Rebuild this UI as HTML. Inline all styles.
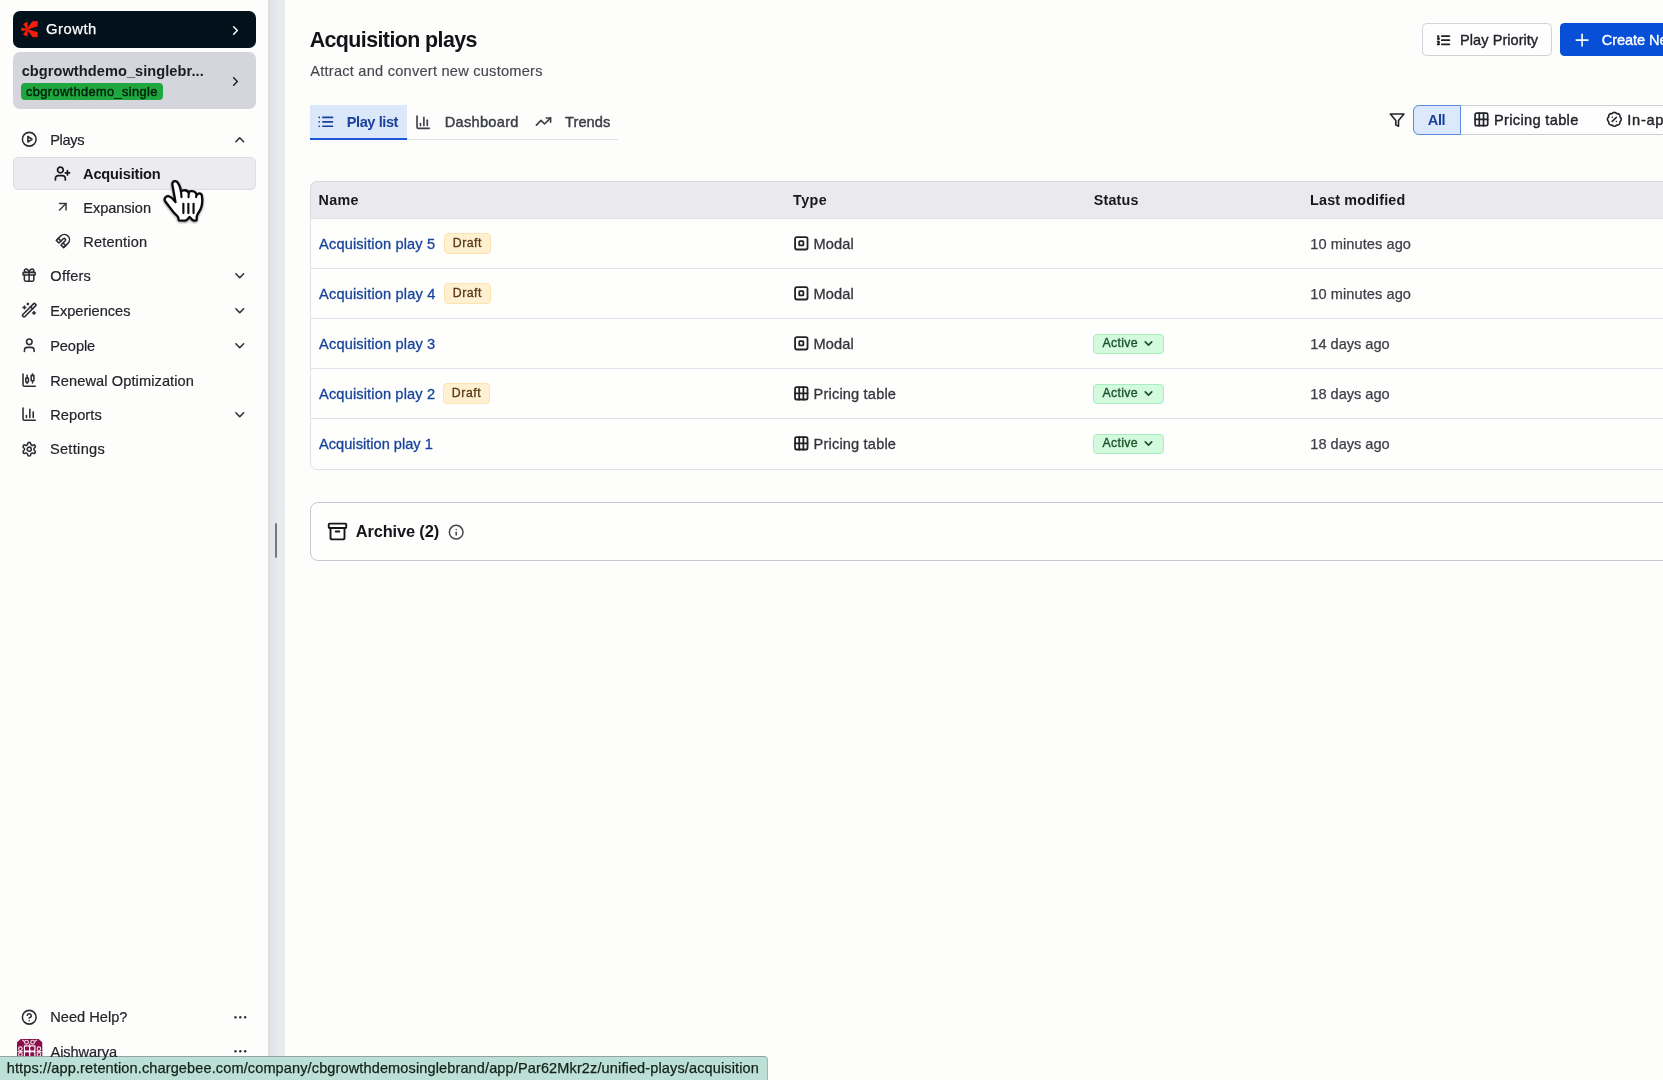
<!DOCTYPE html>
<html lang="en">
<head>
<meta charset="utf-8">
<title>Acquisition plays</title>
<style>
*{box-sizing:border-box;margin:0;padding:0}
html,body{width:1663px;height:1080px;overflow:hidden;background:#fdfdfc;font-family:"Liberation Sans",Arial,sans-serif;color:#1a1c22}
.abs{position:absolute}
#txt{position:absolute;left:0;top:0;width:100%;height:100%;opacity:0.999}
.t{position:absolute;white-space:nowrap}
svg{position:absolute;overflow:visible}
</style>
</head>
<body>

<!-- sidebar -->
<div class="abs" style="left:13.2px;top:11px;width:242.6px;height:36.5px;background:#02111b;border-radius:7px"></div>
<div class="abs" style="left:13.2px;top:52.4px;width:242.6px;height:56.7px;background:#d5d5de;border-radius:7px"></div>
<div class="abs" style="left:21px;top:83.1px;width:141.9px;height:16.8px;background:#1ea73e;border-radius:4px"></div>
<div class="abs" style="left:13px;top:157px;width:243px;height:32.6px;background:#ececf0;border:1px solid #dcdce6;border-radius:5px"></div>
<svg style="left:21px;top:21px" width="17" height="16.5" viewBox="0 0 17 16.5"><g fill="#f21d0d"><polygon points="5.9,8.2 2.0,3.1 6.5,0.6 6.7,7"/><polygon points="6.3,7.1 11.5,0.3 16.7,0 16.7,5.3 12.7,6.4 6.6,8.6"/><polygon points="6,7.6 0.1,6.7 0.7,10.2 6,8.9"/><polygon points="6.6,7.9 12.7,10.1 16.7,11 16.7,16.2 11.5,15.9 6.3,9.3"/><polygon points="5.9,8.2 2.0,13.6 6.5,15.7 6.7,9.4"/></g></svg>
<svg style="left:227.70px;top:22.90px;color:#ffffff" width="15.00" height="15.00" viewBox="0 0 24 24" fill="none" stroke="#ffffff" stroke-width="2.40" stroke-linecap="round" stroke-linejoin="round"><path d="m9 18 6-6-6-6"/></svg>
<svg style="left:227.70px;top:74.10px;color:#1f2128" width="15.00" height="15.00" viewBox="0 0 24 24" fill="none" stroke="#1f2128" stroke-width="2.40" stroke-linecap="round" stroke-linejoin="round"><path d="m9 18 6-6-6-6"/></svg>
<svg style="left:20.95px;top:131.15px;color:#2b2d34" width="16.50" height="16.50" viewBox="0 0 24 24" fill="none" stroke="#2b2d34" stroke-width="2.25" stroke-linecap="round" stroke-linejoin="round"><circle cx="12" cy="12" r="10"/><polygon points="10 8 16 12 10 16 10 8"/></svg>
<svg style="left:21.30px;top:267.40px;color:#2b2d34" width="16.20" height="16.20" viewBox="0 0 24 24" fill="none" stroke="#2b2d34" stroke-width="2.30" stroke-linecap="round" stroke-linejoin="round"><rect x="3" y="8" width="18" height="4" rx="1"/><path d="M12 8v13"/><path d="M19 12v7a2 2 0 0 1-2 2H7a2 2 0 0 1-2-2v-7"/><path d="M7.500 8a2.500 2.500 0 0 1 0-5A4.800 8 0 0 1 12 8a4.800 8 0 0 1 4.500-5 2.500 2.500 0 0 1 0 5"/></svg>
<svg style="left:21.10px;top:302.10px;color:#2b2d34" width="16.40" height="16.40" viewBox="0 0 24 24" fill="none" stroke="#2b2d34" stroke-width="2.27" stroke-linecap="round" stroke-linejoin="round"><path d="m21.640 3.640-1.280-1.280a1.210 1.210 0 0 0-1.720 0L2.360 18.640a1.210 1.210 0 0 0 0 1.720l1.280 1.280a1.200 1.200 0 0 0 1.720 0L21.640 5.360a1.200 1.200 0 0 0 0-1.720"/><path d="m14 7 3 3"/><path d="M5 6v4"/><path d="M19 14v4"/><path d="M10 2v2"/><path d="M7 8H3"/><path d="M21 16h-4"/><path d="M11 3H9"/></svg>
<svg style="left:21.00px;top:337.10px;color:#2b2d34" width="16.60" height="16.60" viewBox="0 0 24 24" fill="none" stroke="#2b2d34" stroke-width="2.24" stroke-linecap="round" stroke-linejoin="round"><path d="M19 21v-2a4 4 0 0 0-4-4H9a4 4 0 0 0-4 4v2"/><circle cx="12" cy="7" r="4"/></svg>
<svg style="left:21.05px;top:371.95px;color:#2b2d34" width="16.30" height="16.30" viewBox="0 0 24 24" fill="none" stroke="#2b2d34" stroke-width="2.28" stroke-linecap="round" stroke-linejoin="round"><path d="M9 5v4"/><rect width="4" height="6" x="7" y="9" rx="1"/><path d="M9 15v2"/><path d="M17 3v2"/><rect width="4" height="8" x="15" y="5" rx="1"/><path d="M17 13v3"/><path d="M3 3v16a2 2 0 0 0 2 2h16"/></svg>
<svg style="left:21.05px;top:406.25px;color:#2b2d34" width="16.30" height="16.30" viewBox="0 0 24 24" fill="none" stroke="#2b2d34" stroke-width="2.28" stroke-linecap="round" stroke-linejoin="round"><path d="M3 3v16a2 2 0 0 0 2 2h16"/><path d="M18 17V9"/><path d="M13 17V5"/><path d="M8 17v-3"/></svg>
<svg style="left:21.10px;top:441.20px;color:#2b2d34" width="16.40" height="16.40" viewBox="0 0 24 24" fill="none" stroke="#2b2d34" stroke-width="2.27" stroke-linecap="round" stroke-linejoin="round"><path d="M12.220 2h-.440a2 2 0 0 0-2 2v.180a2 2 0 0 1-1 1.730l-.430.250a2 2 0 0 1-2 0l-.150-.080a2 2 0 0 0-2.730.730l-.220.380a2 2 0 0 0 .730 2.730l.150.100a2 2 0 0 1 1 1.720v.510a2 2 0 0 1-1 1.740l-.150.090a2 2 0 0 0-.730 2.730l.220.380a2 2 0 0 0 2.730.730l.150-.080a2 2 0 0 1 2 0l.430.250a2 2 0 0 1 1 1.730V20a2 2 0 0 0 2 2h.440a2 2 0 0 0 2-2v-.180a2 2 0 0 1 1-1.730l.430-.250a2 2 0 0 1 2 0l.150.080a2 2 0 0 0 2.730-.730l.220-.390a2 2 0 0 0-.730-2.730l-.150-.080a2 2 0 0 1-1-1.740v-.500a2 2 0 0 1 1-1.740l.150-.090a2 2 0 0 0 .730-2.730l-.220-.380a2 2 0 0 0-2.730-.730l-.150.080a2 2 0 0 1-2 0l-.430-.250a2 2 0 0 1-1-1.730V4a2 2 0 0 0-2-2z"/><circle cx="12" cy="12" r="3"/></svg>
<svg style="left:20.95px;top:1008.75px;color:#2b2d34" width="16.50" height="16.50" viewBox="0 0 24 24" fill="none" stroke="#2b2d34" stroke-width="2.25" stroke-linecap="round" stroke-linejoin="round"><circle cx="12" cy="12" r="10"/><path d="M9.090 9a3 3 0 0 1 5.830 1c0 2-3 3-3 3"/><path d="M12 17h.01"/></svg>
<svg style="left:53.80px;top:165.10px;color:#17181d" width="17.00" height="17.00" viewBox="0 0 24 24" fill="none" stroke="#17181d" stroke-width="2.40" stroke-linecap="round" stroke-linejoin="round"><path d="M16 21v-2a4 4 0 0 0-4-4H6a4 4 0 0 0-4 4v2"/><circle cx="9" cy="7" r="4"/><path d="M19 8v6"/><path d="M22 11h-6"/></svg>
<svg style="left:54.50px;top:199.40px;color:#3a3c43" width="15.60" height="15.60" viewBox="0 0 24 24" fill="none" stroke="#3a3c43" stroke-width="2.31" stroke-linecap="round" stroke-linejoin="round"><path d="M7 7h10v10"/><path d="M7 17 17 7"/></svg>
<svg style="left:54.60px;top:233.00px;color:#2b2d34" width="16.00" height="16.00" viewBox="0 0 24 24" fill="none" stroke="#2b2d34" stroke-width="2.33" stroke-linecap="round" stroke-linejoin="round"><path d="m6 15-4-4 6.750-6.770a7.790 7.790 0 0 1 11 11L13 22l-4-4 6.390-6.360a2.140 2.140 0 0 0-3-3L6 15"/><path d="m5 8 4 4"/><path d="m12 15 4 4"/></svg>
<svg style="left:232.05px;top:131.85px;color:#2b2d34" width="15.50" height="15.50" viewBox="0 0 24 24" fill="none" stroke="#2b2d34" stroke-width="2.40" stroke-linecap="round" stroke-linejoin="round"><path d="m18 15-6-6-6 6"/></svg>
<svg style="left:232.05px;top:267.75px;color:#2b2d34" width="15.50" height="15.50" viewBox="0 0 24 24" fill="none" stroke="#2b2d34" stroke-width="2.40" stroke-linecap="round" stroke-linejoin="round"><path d="m6 9 6 6 6-6"/></svg>
<svg style="left:232.05px;top:302.65px;color:#2b2d34" width="15.50" height="15.50" viewBox="0 0 24 24" fill="none" stroke="#2b2d34" stroke-width="2.40" stroke-linecap="round" stroke-linejoin="round"><path d="m6 9 6 6 6-6"/></svg>
<svg style="left:232.05px;top:337.55px;color:#2b2d34" width="15.50" height="15.50" viewBox="0 0 24 24" fill="none" stroke="#2b2d34" stroke-width="2.40" stroke-linecap="round" stroke-linejoin="round"><path d="m6 9 6 6 6-6"/></svg>
<svg style="left:232.05px;top:406.75px;color:#2b2d34" width="15.50" height="15.50" viewBox="0 0 24 24" fill="none" stroke="#2b2d34" stroke-width="2.40" stroke-linecap="round" stroke-linejoin="round"><path d="m6 9 6 6 6-6"/></svg>
<svg style="left:231.60px;top:1008.90px;color:#2b2d34" width="16.60" height="16.60" viewBox="0 0 24 24" fill="none" stroke="#2b2d34" stroke-width="0.00" stroke-linecap="round" stroke-linejoin="round"><circle cx="5" cy="12" r="1.700" fill="currentColor" stroke="none"/><circle cx="12" cy="12" r="1.700" fill="currentColor" stroke="none"/><circle cx="19" cy="12" r="1.700" fill="currentColor" stroke="none"/></svg>
<svg style="left:231.60px;top:1042.70px;color:#2b2d34" width="16.60" height="16.60" viewBox="0 0 24 24" fill="none" stroke="#2b2d34" stroke-width="0.00" stroke-linecap="round" stroke-linejoin="round"><circle cx="5" cy="12" r="1.700" fill="currentColor" stroke="none"/><circle cx="12" cy="12" r="1.700" fill="currentColor" stroke="none"/><circle cx="19" cy="12" r="1.700" fill="currentColor" stroke="none"/></svg>
<svg style="left:16.9px;top:1038.9px" width="25.3" height="25.3" viewBox="0 0 24 24"><path d="M3.500 0H20.500L24 3V21a3 3 0 0 1-3 3H3a3 3 0 0 1-3-3V3Z" fill="#890f4b"/><rect x="6.500" y="6" width="11" height="11.500" fill="#fdf6f9"/><g fill="#890f4b"><rect x="7.600" y="7.200" width="3.800" height="3.800" rx="0.8"/><rect x="12.600" y="7.200" width="3.800" height="3.800" rx="0.8"/><rect x="7.600" y="12.600" width="3.800" height="3.800" rx="0.8"/><rect x="12.600" y="12.600" width="3.800" height="3.800" rx="0.8"/></g><g fill="none" stroke="#f3dbe6" stroke-width="1.1"><circle cx="9" cy="3" r="1.800"/><circle cx="14.800" cy="3" r="1.800"/><circle cx="3.200" cy="9.200" r="1.700"/><circle cx="20.800" cy="9.200" r="1.700"/><circle cx="3.200" cy="14.700" r="1.700"/><circle cx="20.800" cy="14.700" r="1.700"/><path d="M0.500 12h5M18.500 12h5M5 0.800l2 1.500M19 0.800l-2 1.500M12 4.500v1.500"/></g></svg>
<div class="abs" style="left:268.4px;top:0px;width:16.6px;height:1080px;background:linear-gradient(90deg,#dcdedd 0,#e1e3e5 18%,#e5e6ea 40%,#e9eaec 60%,#ebeeed 100%)"></div>
<div class="abs" style="left:275px;top:523px;width:2.2px;height:35px;background:#77787d;border-radius:1px"></div>
<!-- main -->
<div class="abs" style="left:310px;top:139.3px;width:308.4px;height:1px;background:#e0e0e9"></div>
<div class="abs" style="left:309.8px;top:105.4px;width:97.6px;height:33.2px;background:#dbe8fa"></div>
<div class="abs" style="left:309.8px;top:138.4px;width:97.6px;height:2px;background:#1d56d8"></div>
<svg style="left:317.15px;top:113.25px;color:#1c3f99" width="17.70" height="17.70" viewBox="0 0 24 24" fill="none" stroke="#1c3f99" stroke-width="2.31" stroke-linecap="round" stroke-linejoin="round"><path d="M3 12h.01"/><path d="M3 18h.01"/><path d="M3 6h.01"/><path d="M8 12h13"/><path d="M8 18h13"/><path d="M8 6h13"/></svg>
<svg style="left:415.30px;top:114.10px;color:#3f4149" width="16.40" height="16.40" viewBox="0 0 24 24" fill="none" stroke="#3f4149" stroke-width="2.41" stroke-linecap="round" stroke-linejoin="round"><path d="M3 3v16a2 2 0 0 0 2 2h16"/><path d="M18 17V9"/><path d="M13 17V5"/><path d="M8 17v-3"/></svg>
<svg style="left:534.90px;top:113.40px;color:#3f4149" width="17.00" height="17.00" viewBox="0 0 24 24" fill="none" stroke="#3f4149" stroke-width="2.33" stroke-linecap="round" stroke-linejoin="round"><polyline points="22 7 13.5 15.5 8.5 10.5 2 17"/><polyline points="16 7 22 7 22 13"/></svg>
<div class="abs" style="left:1422px;top:23px;width:129.6px;height:33.2px;background:#fefefe;border:1px solid #d2d2db;border-radius:4.500px"></div>
<svg style="left:1435.20px;top:31.50px;color:#1d1f25" width="16.40" height="16.40" viewBox="0 0 24 24" fill="none" stroke="#1d1f25" stroke-width="2.63" stroke-linecap="round" stroke-linejoin="round"><path d="M10 12h11"/><path d="M10 18h11"/><path d="M10 6h11"/><path d="M4 10h2"/><path d="M6 18H4c0-1 2-2 2-3s-1-1.500-2-1"/><path d="M4 6h1v4"/></svg>
<div class="abs" style="left:1560.2px;top:22.8px;width:129.8px;height:33.2px;background:#064fd6;border-radius:4.500px"></div>
<svg style="left:1572.40px;top:29.60px;color:#ffffff" width="20.20" height="20.20" viewBox="0 0 24 24" fill="none" stroke="#ffffff" stroke-width="1.90" stroke-linecap="round" stroke-linejoin="round"><path d="M5 12h14"/><path d="M12 5v14"/></svg>
<svg style="left:1388.65px;top:111.75px;color:#22242b" width="16.30" height="16.30" viewBox="0 0 24 24" fill="none" stroke="#22242b" stroke-width="2.36" stroke-linecap="round" stroke-linejoin="round"><polygon points="22 3 2 3 10 12.46 10 19 14 21 14 12.46 22 3"/></svg>
<div class="abs" style="left:1413px;top:104.8px;width:277px;height:30.1px;background:#fefefe;border:1px solid #cdcdd5;border-radius:6px"></div>
<div class="abs" style="left:1413px;top:104.8px;width:47.8px;height:30.1px;background:#dbe9fb;border:1px solid #5a8de0;border-radius:6px 0 0 6px"></div>
<svg style="left:1473.20px;top:111.30px;color:#22242b" width="16.80" height="16.80" viewBox="0 0 24 24" fill="none" stroke="#22242b" stroke-width="2.43" stroke-linecap="round" stroke-linejoin="round"><rect width="18" height="18" x="3" y="3" rx="2"/><path d="M9 3v18"/><path d="M15 3v18"/><path d="M3 12h18"/></svg>
<svg style="left:1606.35px;top:111.35px;color:#22242b" width="16.70" height="16.70" viewBox="0 0 24 24" fill="none" stroke="#22242b" stroke-width="2.30" stroke-linecap="round" stroke-linejoin="round"><path d="M3.850 8.620a4 4 0 0 1 4.780-4.770 4 4 0 0 1 6.740 0 4 4 0 0 1 4.780 4.780 4 4 0 0 1 0 6.740 4 4 0 0 1-4.770 4.780 4 4 0 0 1-6.750 0 4 4 0 0 1-4.780-4.770 4 4 0 0 1 0-6.760Z"/><path d="m15 9-6 6"/><path d="M9 9h.01"/><path d="M15 15h.01"/></svg>
<div class="abs" style="left:309.5px;top:180.8px;width:1380.5px;height:288.9px;background:#fefefd;border:1px solid #e0e0ea;border-radius:7px 0 0 7px"></div>
<div class="abs" style="left:309.6px;top:180.8px;width:1380.4px;height:38.2px;background:#eaeaee;border:1px solid #d9d9e4;border-bottom-color:#dedee7;border-radius:7px 0 0 0"></div>
<div class="abs" style="left:310.6px;top:268px;width:1379.4px;height:1px;background:#e0e0ea"></div>
<div class="abs" style="left:310.6px;top:318.1px;width:1379.4px;height:1px;background:#e0e0ea"></div>
<div class="abs" style="left:310.6px;top:368.2px;width:1379.4px;height:1px;background:#e0e0ea"></div>
<div class="abs" style="left:310.6px;top:418.3px;width:1379.4px;height:1px;background:#e0e0ea"></div>
<svg style="left:792.50px;top:235.10px;color:#202228" width="16.60" height="16.60" viewBox="0 0 24 24" fill="none" stroke="#202228" stroke-width="2.60" stroke-linecap="round" stroke-linejoin="round"><rect width="18" height="18" x="3" y="3" rx="2.500"/><rect width="6" height="6" x="9" y="9" rx="1"/></svg>
<div class="abs" style="left:444px;top:233.4px;width:47.2px;height:20.7px;background:#fef0d0;border:1px solid #fce4ac;border-radius:4px"></div>
<svg style="left:792.50px;top:285.15px;color:#202228" width="16.60" height="16.60" viewBox="0 0 24 24" fill="none" stroke="#202228" stroke-width="2.60" stroke-linecap="round" stroke-linejoin="round"><rect width="18" height="18" x="3" y="3" rx="2.500"/><rect width="6" height="6" x="9" y="9" rx="1"/></svg>
<div class="abs" style="left:444px;top:283.4px;width:47.2px;height:20.7px;background:#fef0d0;border:1px solid #fce4ac;border-radius:4px"></div>
<svg style="left:792.50px;top:335.20px;color:#202228" width="16.60" height="16.60" viewBox="0 0 24 24" fill="none" stroke="#202228" stroke-width="2.60" stroke-linecap="round" stroke-linejoin="round"><rect width="18" height="18" x="3" y="3" rx="2.500"/><rect width="6" height="6" x="9" y="9" rx="1"/></svg>
<div class="abs" style="left:1093px;top:333.8px;width:70.7px;height:20.5px;background:#d4fade;border:1px solid #a8eebc;border-radius:4px"></div>
<svg style="left:1142.20px;top:337.40px;color:#1a522b" width="13.00" height="13.00" viewBox="0 0 24 24" fill="none" stroke="#1a522b" stroke-width="3.14" stroke-linecap="round" stroke-linejoin="round"><path d="m6 9 6 6 6-6"/></svg>
<svg style="left:792.50px;top:385.25px;color:#202228" width="16.60" height="16.60" viewBox="0 0 24 24" fill="none" stroke="#202228" stroke-width="2.60" stroke-linecap="round" stroke-linejoin="round"><rect width="18" height="18" x="3" y="3" rx="2"/><path d="M9 3v18"/><path d="M15 3v18"/><path d="M3 12h18"/></svg>
<div class="abs" style="left:443.2px;top:383.4px;width:47.2px;height:20.7px;background:#fef0d0;border:1px solid #fce4ac;border-radius:4px"></div>
<div class="abs" style="left:1093px;top:383.8px;width:70.7px;height:20.5px;background:#d4fade;border:1px solid #a8eebc;border-radius:4px"></div>
<svg style="left:1142.20px;top:387.40px;color:#1a522b" width="13.00" height="13.00" viewBox="0 0 24 24" fill="none" stroke="#1a522b" stroke-width="3.14" stroke-linecap="round" stroke-linejoin="round"><path d="m6 9 6 6 6-6"/></svg>
<svg style="left:792.50px;top:435.30px;color:#202228" width="16.60" height="16.60" viewBox="0 0 24 24" fill="none" stroke="#202228" stroke-width="2.60" stroke-linecap="round" stroke-linejoin="round"><rect width="18" height="18" x="3" y="3" rx="2"/><path d="M9 3v18"/><path d="M15 3v18"/><path d="M3 12h18"/></svg>
<div class="abs" style="left:1093px;top:433.8px;width:70.7px;height:20.5px;background:#d4fade;border:1px solid #a8eebc;border-radius:4px"></div>
<svg style="left:1142.20px;top:437.40px;color:#1a522b" width="13.00" height="13.00" viewBox="0 0 24 24" fill="none" stroke="#1a522b" stroke-width="3.14" stroke-linecap="round" stroke-linejoin="round"><path d="m6 9 6 6 6-6"/></svg>
<div class="abs" style="left:309.6px;top:501.8px;width:1380.4px;height:58.8px;background:#fefefd;border:1px solid #c8c8d5;border-radius:8px 0 0 8px"></div>
<svg style="left:326.50px;top:521.10px;color:#15161b" width="21.00" height="21.00" viewBox="0 0 24 24" fill="none" stroke="#15161b" stroke-width="2.17" stroke-linecap="round" stroke-linejoin="round"><rect width="20" height="5" x="2" y="3" rx="1"/><path d="M4 8v11a2 2 0 0 0 2 2h12a2 2 0 0 0 2-2V8"/><path d="M10 12h4"/></svg>
<svg style="left:447.70px;top:523.60px;color:#45474f" width="16.40" height="16.40" viewBox="0 0 24 24" fill="none" stroke="#45474f" stroke-width="2.20" stroke-linecap="round" stroke-linejoin="round"><circle cx="12" cy="12" r="10"/><path d="M12 16v-4"/><path d="M12 8h.01"/></svg>
<!-- status bubble -->
<div class="abs" style="left:-1px;top:1056.4px;width:768.6px;height:24.6px;background:#bce0d5;border:1px solid #9fb9b1;border-top-color:#93a39e;border-radius:0 4px 0 0"></div>
<!-- text -->
<div id="txt">
<div class="t" id="t0" style="left:46.10px;top:19.27px;font-size:14.8px;line-height:21px;font-weight:normal;color:#ffffff;letter-spacing:0.507px;-webkit-text-stroke:0.25px #ffffff;">Growth</div>
<div class="t" id="t1" style="left:21.67px;top:60.84px;font-size:14.6px;line-height:20px;font-weight:bold;color:#1b1c22;letter-spacing:0.053px;">cbgrowthdemo_singlebr...</div>
<div class="t" id="t2" style="left:26.08px;top:82.56px;font-size:12.8px;line-height:18px;font-weight:normal;color:#031c0a;letter-spacing:0.371px;-webkit-text-stroke:0.4px #031c0a;">cbgrowthdemo_single</div>
<div class="t" id="t3" style="left:50.21px;top:130.14px;font-size:14.6px;line-height:20px;font-weight:normal;color:#22242b;letter-spacing:-0.348px;-webkit-text-stroke:0.2px #22242b;">Plays</div>
<div class="t" id="t4" style="left:83.21px;top:197.64px;font-size:14.6px;line-height:20px;font-weight:normal;color:#22242b;letter-spacing:-0.043px;-webkit-text-stroke:0.2px #22242b;">Expansion</div>
<div class="t" id="t5" style="left:83.21px;top:231.74px;font-size:14.6px;line-height:20px;font-weight:normal;color:#22242b;letter-spacing:0.173px;-webkit-text-stroke:0.2px #22242b;">Retention</div>
<div class="t" id="t6" style="left:50.36px;top:265.74px;font-size:14.6px;line-height:20px;font-weight:normal;color:#22242b;letter-spacing:0.201px;-webkit-text-stroke:0.2px #22242b;">Offers</div>
<div class="t" id="t7" style="left:50.21px;top:300.64px;font-size:14.6px;line-height:20px;font-weight:normal;color:#22242b;letter-spacing:-0.001px;-webkit-text-stroke:0.2px #22242b;">Experiences</div>
<div class="t" id="t8" style="left:50.21px;top:335.64px;font-size:14.6px;line-height:20px;font-weight:normal;color:#22242b;letter-spacing:-0.093px;-webkit-text-stroke:0.2px #22242b;">People</div>
<div class="t" id="t9" style="left:50.21px;top:370.74px;font-size:14.6px;line-height:20px;font-weight:normal;color:#22242b;letter-spacing:0.094px;-webkit-text-stroke:0.2px #22242b;">Renewal Optimization</div>
<div class="t" id="t10" style="left:50.21px;top:404.64px;font-size:14.6px;line-height:20px;font-weight:normal;color:#22242b;letter-spacing:0.066px;-webkit-text-stroke:0.2px #22242b;">Reports</div>
<div class="t" id="t11" style="left:49.92px;top:439.44px;font-size:14.6px;line-height:20px;font-weight:normal;color:#22242b;letter-spacing:0.304px;-webkit-text-stroke:0.2px #22242b;">Settings</div>
<div class="t" id="t12" style="left:50.21px;top:1007.24px;font-size:14.6px;line-height:20px;font-weight:normal;color:#22242b;letter-spacing:0.019px;-webkit-text-stroke:0.2px #22242b;">Need Help?</div>
<div class="t" id="t13" style="left:50.54px;top:1041.54px;font-size:14.6px;line-height:20px;font-weight:normal;color:#22242b;letter-spacing:-0.096px;-webkit-text-stroke:0.2px #22242b;">Aishwarya</div>
<div class="t" id="t14" style="left:83.09px;top:163.74px;font-size:14.6px;line-height:20px;font-weight:bold;color:#15161b;letter-spacing:-0.183px;">Acquisition</div>
<div class="t" id="t15" style="left:6.69px;top:1057.98px;font-size:14.5px;line-height:20px;font-weight:normal;color:#14201c;letter-spacing:0.137px;-webkit-text-stroke:0.25px #14201c;">https://app.retention.chargebee.com/company/cbgrowthdemosinglebrand/app/Par62Mkr2z/unified-plays/acquisition</div>
<div class="t" id="t16" style="left:309.69px;top:25.48px;font-size:21.4px;line-height:30px;font-weight:bold;color:#121318;letter-spacing:-0.586px;">Acquisition plays</div>
<div class="t" id="t17" style="left:310.24px;top:60.74px;font-size:14.6px;line-height:20px;font-weight:normal;color:#45474f;letter-spacing:0.235px;-webkit-text-stroke:0.15px #45474f;">Attract and convert new customers</div>
<div class="t" id="t18" style="left:346.74px;top:111.84px;font-size:14.6px;line-height:20px;font-weight:bold;color:#1c3f99;letter-spacing:-0.434px;">Play list</div>
<div class="t" id="t19" style="left:444.66px;top:111.84px;font-size:14.6px;line-height:20px;font-weight:normal;color:#3c3e46;letter-spacing:0.305px;-webkit-text-stroke:0.45px #3c3e46;">Dashboard</div>
<div class="t" id="t20" style="left:565.12px;top:111.84px;font-size:14.6px;line-height:20px;font-weight:normal;color:#3c3e46;letter-spacing:0.051px;-webkit-text-stroke:0.45px #3c3e46;">Trends</div>
<div class="t" id="t21" style="left:1460.10px;top:29.54px;font-size:14.6px;line-height:20px;font-weight:normal;color:#22242b;letter-spacing:0.019px;-webkit-text-stroke:0.35px #22242b;">Play Priority</div>
<div class="t" id="t22" style="left:1601.85px;top:29.64px;font-size:14.6px;line-height:20px;font-weight:normal;color:#ffffff;letter-spacing:-0.090px;-webkit-text-stroke:0.35px #ffffff;">Create New</div>
<div class="t" id="t23" style="left:1427.82px;top:109.84px;font-size:14.6px;line-height:20px;font-weight:bold;color:#1c3f99;letter-spacing:-0.448px;">All</div>
<div class="t" id="t24" style="left:1493.89px;top:109.84px;font-size:14.6px;line-height:20px;font-weight:normal;color:#22242b;letter-spacing:0.342px;-webkit-text-stroke:0.4px #22242b;">Pricing table</div>
<div class="t" id="t25" style="left:1627.29px;top:109.84px;font-size:14.6px;line-height:20px;font-weight:normal;color:#22242b;letter-spacing:0.732px;-webkit-text-stroke:0.4px #22242b;">In-app</div>
<div class="t" id="t26" style="left:318.52px;top:189.75px;font-size:14.3px;line-height:20px;font-weight:bold;color:#17181d;letter-spacing:0.310px;">Name</div>
<div class="t" id="t27" style="left:793.09px;top:189.75px;font-size:14.3px;line-height:20px;font-weight:bold;color:#17181d;letter-spacing:0.411px;">Type</div>
<div class="t" id="t28" style="left:1093.65px;top:189.75px;font-size:14.3px;line-height:20px;font-weight:bold;color:#17181d;letter-spacing:0.226px;">Status</div>
<div class="t" id="t29" style="left:1310.12px;top:189.75px;font-size:14.3px;line-height:20px;font-weight:bold;color:#17181d;letter-spacing:0.174px;">Last modified</div>
<div class="t" id="t30" style="left:319.07px;top:233.64px;font-size:14.6px;line-height:20px;font-weight:normal;color:#18439b;letter-spacing:0.147px;-webkit-text-stroke:0.3px #18439b;">Acquisition play 5</div>
<div class="t" id="t31" style="left:452.78px;top:235.34px;font-size:12.3px;line-height:17px;font-weight:normal;color:#573716;letter-spacing:0.497px;-webkit-text-stroke:0.3px #573716;">Draft</div>
<div class="t" id="t32" style="left:813.61px;top:233.64px;font-size:14.6px;line-height:20px;font-weight:normal;color:#33353c;letter-spacing:0.069px;-webkit-text-stroke:0.3px #33353c;">Modal</div>
<div class="t" id="t33" style="left:1310.31px;top:233.64px;font-size:14.6px;line-height:20px;font-weight:normal;color:#3d3f47;letter-spacing:0.068px;-webkit-text-stroke:0.25px #3d3f47;">10 minutes ago</div>
<div class="t" id="t34" style="left:319.07px;top:283.64px;font-size:14.6px;line-height:20px;font-weight:normal;color:#18439b;letter-spacing:0.156px;-webkit-text-stroke:0.3px #18439b;">Acquisition play 4</div>
<div class="t" id="t35" style="left:452.78px;top:285.34px;font-size:12.3px;line-height:17px;font-weight:normal;color:#573716;letter-spacing:0.497px;-webkit-text-stroke:0.3px #573716;">Draft</div>
<div class="t" id="t36" style="left:813.61px;top:283.64px;font-size:14.6px;line-height:20px;font-weight:normal;color:#33353c;letter-spacing:0.069px;-webkit-text-stroke:0.3px #33353c;">Modal</div>
<div class="t" id="t37" style="left:1310.31px;top:283.64px;font-size:14.6px;line-height:20px;font-weight:normal;color:#3d3f47;letter-spacing:0.068px;-webkit-text-stroke:0.25px #3d3f47;">10 minutes ago</div>
<div class="t" id="t38" style="left:319.07px;top:333.64px;font-size:14.6px;line-height:20px;font-weight:normal;color:#18439b;letter-spacing:0.151px;-webkit-text-stroke:0.3px #18439b;">Acquisition play 3</div>
<div class="t" id="t39" style="left:813.61px;top:333.64px;font-size:14.6px;line-height:20px;font-weight:normal;color:#33353c;letter-spacing:0.069px;-webkit-text-stroke:0.3px #33353c;">Modal</div>
<div class="t" id="t40" style="left:1102.43px;top:335.14px;font-size:12.3px;line-height:17px;font-weight:normal;color:#1a522b;letter-spacing:0.361px;-webkit-text-stroke:0.35px #1a522b;">Active</div>
<div class="t" id="t41" style="left:1310.31px;top:333.64px;font-size:14.6px;line-height:20px;font-weight:normal;color:#3d3f47;letter-spacing:-0.012px;-webkit-text-stroke:0.25px #3d3f47;">14 days ago</div>
<div class="t" id="t42" style="left:319.07px;top:383.64px;font-size:14.6px;line-height:20px;font-weight:normal;color:#18439b;letter-spacing:0.140px;-webkit-text-stroke:0.3px #18439b;">Acquisition play 2</div>
<div class="t" id="t43" style="left:451.87px;top:385.34px;font-size:12.3px;line-height:17px;font-weight:normal;color:#573716;letter-spacing:0.558px;-webkit-text-stroke:0.3px #573716;">Draft</div>
<div class="t" id="t44" style="left:813.61px;top:383.64px;font-size:14.6px;line-height:20px;font-weight:normal;color:#33353c;letter-spacing:0.169px;-webkit-text-stroke:0.3px #33353c;">Pricing table</div>
<div class="t" id="t45" style="left:1102.43px;top:385.14px;font-size:12.3px;line-height:17px;font-weight:normal;color:#1a522b;letter-spacing:0.361px;-webkit-text-stroke:0.35px #1a522b;">Active</div>
<div class="t" id="t46" style="left:1310.31px;top:383.64px;font-size:14.6px;line-height:20px;font-weight:normal;color:#3d3f47;letter-spacing:-0.012px;-webkit-text-stroke:0.25px #3d3f47;">18 days ago</div>
<div class="t" id="t47" style="left:319.07px;top:433.64px;font-size:14.6px;line-height:20px;font-weight:normal;color:#18439b;letter-spacing:0.012px;-webkit-text-stroke:0.3px #18439b;">Acquisition play 1</div>
<div class="t" id="t48" style="left:813.61px;top:433.64px;font-size:14.6px;line-height:20px;font-weight:normal;color:#33353c;letter-spacing:0.169px;-webkit-text-stroke:0.3px #33353c;">Pricing table</div>
<div class="t" id="t49" style="left:1102.43px;top:435.14px;font-size:12.3px;line-height:17px;font-weight:normal;color:#1a522b;letter-spacing:0.361px;-webkit-text-stroke:0.35px #1a522b;">Active</div>
<div class="t" id="t50" style="left:1310.31px;top:433.64px;font-size:14.6px;line-height:20px;font-weight:normal;color:#3d3f47;letter-spacing:-0.012px;-webkit-text-stroke:0.25px #3d3f47;">18 days ago</div>
<div class="t" id="t51" style="left:355.78px;top:520.12px;font-size:16.4px;line-height:23px;font-weight:bold;color:#15161b;letter-spacing:-0.135px;">Archive (2)</div>
</div>
<!-- cursor -->
<svg style="left:150px;top:165px;filter:drop-shadow(0.6px 1.6px 0.9px rgba(0,0,0,.45))" width="70" height="70" viewBox="0 0 1080 1080"><path d="M385 250C358 250 340 272 345 302L375 470L393 572C370 540 330 495 290 482C255 475 213 510 230 550C250 590 300 640 350 712C380 752 430 785 437 812C442 832 436 850 447 855L545 858C576 855 590 815 610 800C630 815 645 855 676 857L714 855C726 840 714 810 725 780C740 740 780 700 795 640C808 590 808 520 800 470C795 443 762 430 742 446C728 456 722 470 716 450C706 418 668 398 630 404C610 408 602 420 598 430C585 402 548 386 514 392C494 396 484 406 478 405C472 365 458 320 440 292C425 262 405 250 385 250Z" fill="#ffffff" stroke="#0b0b0b" stroke-width="36" stroke-linejoin="round"/><path d="M478 405L486 497M598 430L595 497M717 452L712 497M515 598V742M592 598V742M672 598V742" fill="none" stroke="#0b0b0b" stroke-width="33" stroke-linecap="round"/></svg>
</body>
</html>
